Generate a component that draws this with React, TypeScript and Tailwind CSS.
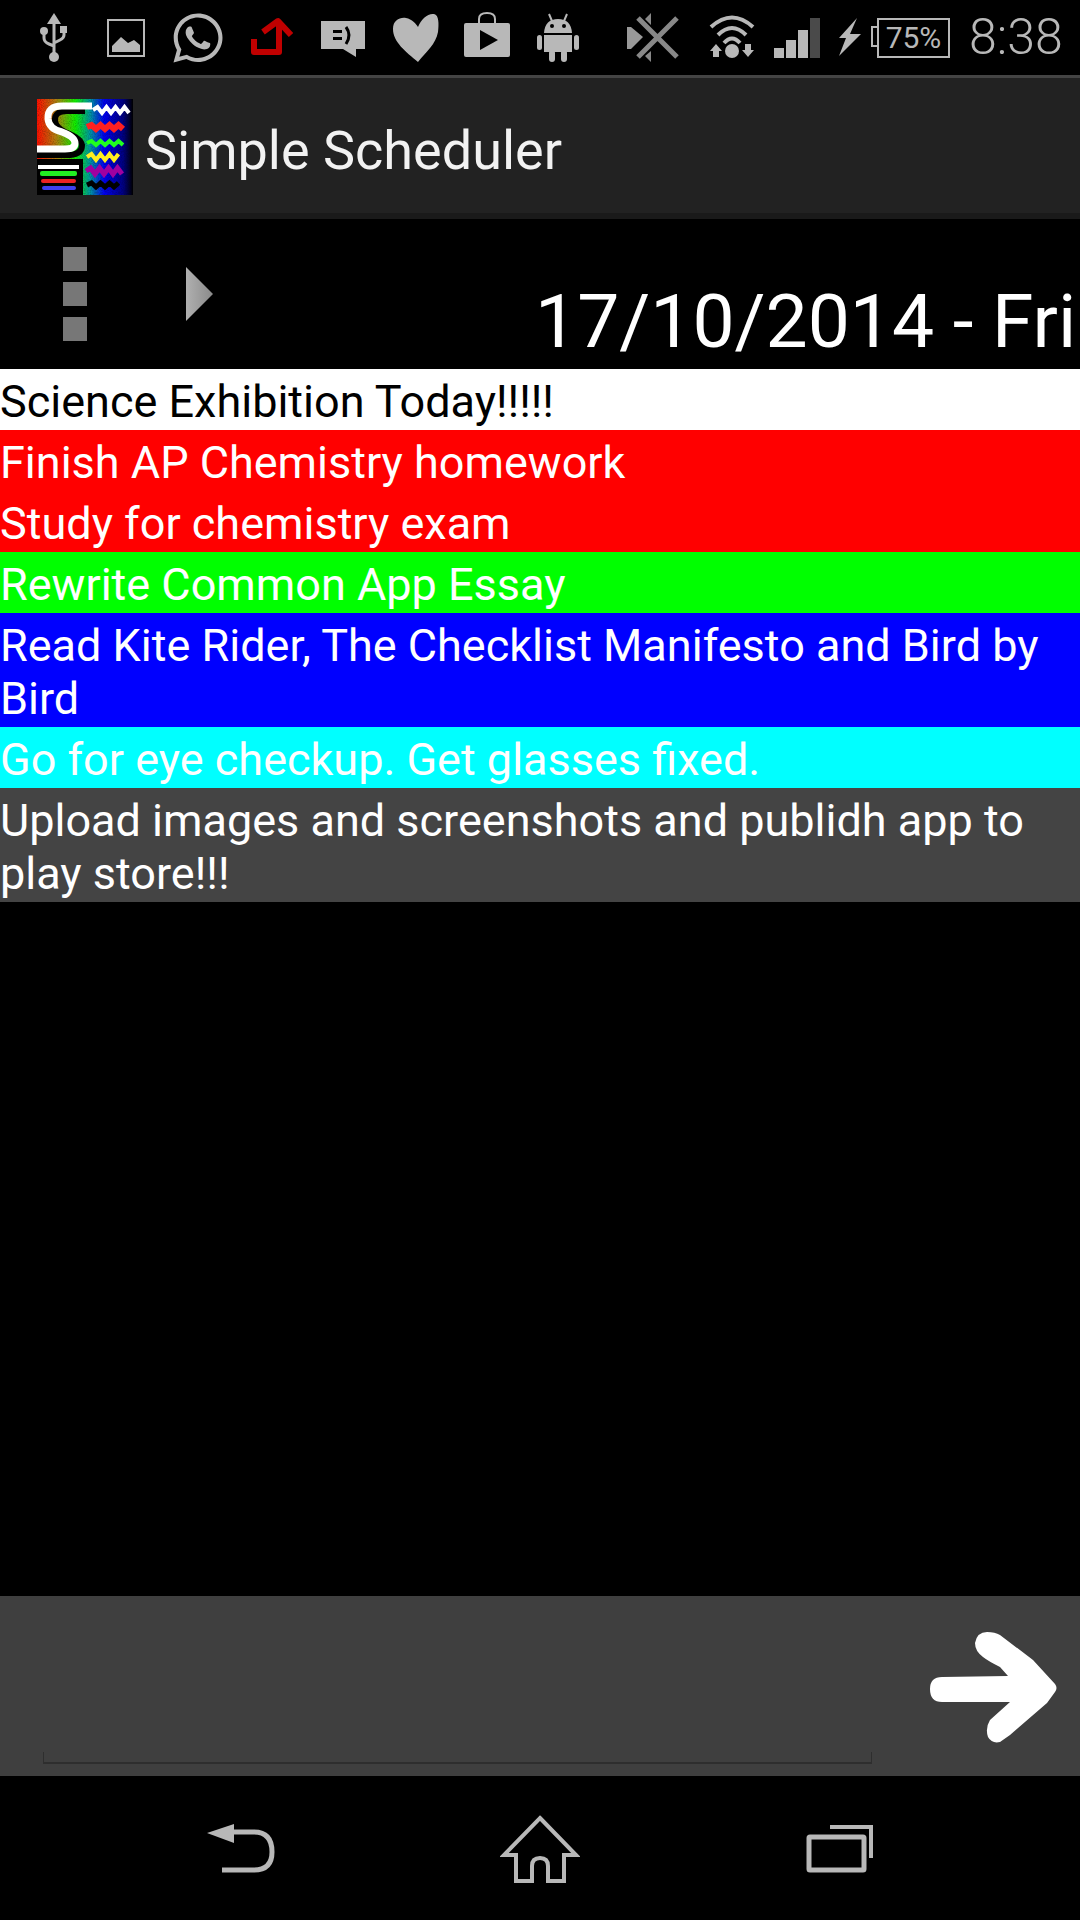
import { FaWhatsapp } from "react-icons/fa"

const GREY = "#b8b8b8"

// zigzag line for the app logo
function zig(x0: number, x1: number, y: number, amp: number, step: number) {
  let d = `M${x0} ${y}`
  let up = true
  for (let x = x0 + step; x <= x1; x += step) {
    d += ` L${x} ${y + (up ? -amp : amp)}`
    up = !up
  }
  return d
}

function Logo() {
  return (
    <svg width="96" height="96" viewBox="0 0 96 96" className="shrink-0 mt-[3px]">
      <defs>
        <linearGradient id="logoBg" x1="0" y1="0" x2="1" y2="0">
          <stop offset="0" stopColor="#ff1000" />
          <stop offset="0.2" stopColor="#b08010" />
          <stop offset="0.4" stopColor="#10f000" />
          <stop offset="0.55" stopColor="#009aa0" />
          <stop offset="0.7" stopColor="#0000f0" />
          <stop offset="0.9" stopColor="#000080" />
          <stop offset="1" stopColor="#000000" />
        </linearGradient>
        <filter id="logoNoise">
          <feTurbulence type="fractalNoise" baseFrequency="0.9" numOctaves="2" seed="4" />
          <feColorMatrix values="0 0 0 0 0  0 0 0 0 0  0 0 0 0 0  1.6 0 0 0 -0.6" />
        </filter>
      </defs>
      <rect width="96" height="96" fill="url(#logoBg)" />
      <rect width="96" height="96" filter="url(#logoNoise)" opacity="0.3" />
      <path d="M48 12 L28 12 Q17 13 18 22 Q19 29 28 33 Q44 39 45 46 Q45 55 33 56 L0 56" fill="none" stroke="#000" strokeWidth="6" />
      <path d="M55 7 L25 7 Q10 7 11 20 Q12 30 25 33 Q38 38 38 44 Q38 50 28 50 L0 50" fill="none" stroke="#fff" strokeWidth="7" />
      <rect x="0" y="60" width="46" height="36" fill="#000" />
      <rect x="1" y="66" width="41" height="4" fill="#fff" />
      <rect x="3" y="72" width="37" height="5" rx="2" fill="#22ee22" />
      <rect x="4" y="80" width="35" height="4" rx="2" fill="#ee2222" />
      <rect x="5" y="87" width="34" height="4" rx="2" fill="#4040ee" />
      <path d={zig(56, 92, 11, 3, 4.5)} fill="none" stroke="#fff" strokeWidth="4" />
      <path d={zig(50, 89, 28, 2, 4.5)} fill="none" stroke="#ff2020" strokeWidth="6" />
      <path d={zig(50, 88, 44, 2, 4.5)} fill="none" stroke="#20ff20" strokeWidth="4" />
      <path d={zig(50, 85, 58, 3, 4.5)} fill="none" stroke="#ffee20" strokeWidth="4" />
      <path d={zig(49, 85, 72, 3, 4.5)} fill="none" stroke="#a000a0" strokeWidth="5" />
      <path d={zig(50, 85, 86, 2, 4.5)} fill="none" stroke="#000" strokeWidth="5" />
    </svg>
  )
}

function StatusIcons() {
  return (
    <>
      {/* usb */}
      <svg width="28" height="75" viewBox="0 0 28 75" className="ml-[40px] shrink-0">
        <path d="M14 13 L7 24 H21 Z" fill={GREY} />
        <path d="M14 20 V55 M4 32 V38 Q4 42 9 44 L14 46 M24 30 V35 Q24 38 20 40 L14 43" stroke={GREY} strokeWidth="3" fill="none" />
        <circle cx="4" cy="31" r="4" fill={GREY} />
        <rect x="20" y="26" width="7" height="7" fill={GREY} />
        <circle cx="14" cy="57" r="5" fill={GREY} />
      </svg>
      {/* picture */}
      <svg width="38" height="75" viewBox="0 0 38 75" className="ml-[39px] shrink-0">
        <rect x="1" y="20" width="36" height="36" fill="none" stroke={GREY} strokeWidth="2" />
        <path d="M5 52 V46 L14 37 L21 43 L27 40 L33 45 V52 Z" fill={GREY} />
      </svg>
      <div className="ml-[27px] shrink-0 flex items-center justify-center w-[52px] h-[75px]">
        <FaWhatsapp size={56} color={GREY} />
      </div>
      {/* upload arrow */}
      <svg width="42" height="75" viewBox="0 0 42 75" className="ml-[27px] shrink-0">
        <path d="M3 39 V52 H28 V24 M12 32 L27 21 L40 35" fill="none" stroke="#c00000" strokeWidth="6" strokeLinejoin="round" />
      </svg>
      {/* sms chat */}
      <svg width="46" height="75" viewBox="0 0 46 75" className="ml-[27px] shrink-0">
        <path d="M1 21 H45 V49 H36 L36 57 L23 49 H1 Z" fill={GREY} />
        <rect x="13" y="30" width="9" height="3" fill="#000" />
        <rect x="13" y="37" width="9" height="3" fill="#000" />
        <path d="M26 27 Q32 35 26 44" fill="none" stroke="#000" strokeWidth="3" />
      </svg>
      {/* heart */}
      <svg width="48" height="75" viewBox="0 0 48 75" className="ml-[26px] shrink-0">
        <path d="M26 62 C14 52 1 42 1 29 C1 20 8 17 14 18 C20 19 24 24 26 27 C29 19 36 13 42 14 C47 15 47 24 46 32 C44 44 34 52 26 62 Z" fill={GREY} />
      </svg>
      {/* play store bag */}
      <svg width="46" height="75" viewBox="0 0 46 75" className="ml-[24px] shrink-0">
        <path d="M15 23 V19 Q15 13 23 13 Q31 13 31 19 V23" fill="none" stroke={GREY} strokeWidth="2" />
        <rect x="0" y="23" width="46" height="34" rx="2" fill={GREY} />
        <path d="M16 30 L34 40 L16 50 Z" fill="#000" />
      </svg>
      {/* android */}
      <svg width="42" height="75" viewBox="0 0 42 75" className="ml-[27px] shrink-0">
        <path d="M12 14 L15 21 M30 14 L27 21" stroke={GREY} strokeWidth="2" />
        <path d="M7 33 Q8 19 21 19 Q34 19 35 33 Z" fill={GREY} />
        <circle cx="15" cy="26" r="2" fill="#000" />
        <circle cx="27" cy="26" r="2" fill="#000" />
        <path d="M7 35 H35 V52 H7 Z" fill={GREY} />
        <rect x="0" y="35" width="5" height="15" rx="2.5" fill={GREY} />
        <rect x="37" y="35" width="5" height="15" rx="2.5" fill={GREY} />
        <rect x="12" y="50" width="6" height="12" rx="3" fill={GREY} />
        <rect x="24" y="50" width="6" height="12" rx="3" fill={GREY} />
      </svg>
      {/* bluetooth/nfc crossed */}
      <svg width="52" height="75" viewBox="0 0 52 75" className="ml-[48px] shrink-0">
        <path d="M0 27 H4 L16 37 L4 49 H0 Z" fill="#999" />
        <path d="M24 13 V25 L18 19 Z M24 51 V62 L18 56 Z" fill="#888" />
        <path d="M11 18 L50 57 M50 18 L11 57" stroke="#888" strokeWidth="5" />
      </svg>
      {/* wifi */}
      <svg width="46" height="75" viewBox="0 0 46 75" className="ml-[30px] shrink-0">
        <path d="M2 27 Q23 8 44 27" fill="none" stroke={GREY} strokeWidth="4" />
        <path d="M9 35 Q23 21 37 35" fill="none" stroke={GREY} strokeWidth="4" />
        <path d="M15 43 Q23 34 31 43" fill="none" stroke={GREY} strokeWidth="4" />
        <circle cx="23" cy="51" r="7" fill={GREY} />
        <path d="M7 44 L13 51 H10 V57 H4 V51 H1 Z M39 57 L33 50 H36 V44 H42 V50 H45 Z" fill={GREY} />
      </svg>
      {/* signal */}
      <svg width="46" height="75" viewBox="0 0 46 75" className="ml-[19px] shrink-0">
        <rect x="0" y="48" width="10" height="10" fill={GREY} />
        <rect x="12" y="40" width="10" height="18" fill={GREY} />
        <rect x="24" y="30" width="10" height="28" fill={GREY} />
        <rect x="36" y="18" width="10" height="40" fill="#4a4a4a" />
      </svg>
      {/* charging bolt */}
      <svg width="23" height="75" viewBox="0 0 23 75" className="ml-[18px] shrink-0">
        <path d="M19 18 L12 34 H23 L1 56 L8 38 H1 Z" fill={GREY} />
      </svg>
      {/* battery */}
      <div className="ml-[9px] shrink-0 flex items-center h-[75px]">
        <svg width="8" height="75" viewBox="0 0 8 75">
          <path d="M7 27 H2 V46 H7" fill="none" stroke={GREY} strokeWidth="2" />
        </svg>
        <div className="w-[73px] h-[40px] border-2 border-[#b8b8b8] -ml-px flex items-center justify-center text-[30px] leading-none text-[#b8b8b8]">
          75%
        </div>
      </div>
      <span className="ml-[19px] text-[50px] leading-[75px] font-light text-[#b8b8b8] whitespace-nowrap">8:38</span>
    </>
  )
}

const rows = [
  { text: "Science Exhibition Today!!!!!", bg: "bg-white", fg: "text-black" },
  { text: "Finish AP Chemistry homework", bg: "bg-[#ff0000]", fg: "text-white" },
  { text: "Study for chemistry exam", bg: "bg-[#ff0000]", fg: "text-white" },
  { text: "Rewrite Common App Essay", bg: "bg-[#00ff00]", fg: "text-white" },
  { text: "Read Kite Rider, The Checklist Manifesto and Bird by Bird", bg: "bg-[#0000ff]", fg: "text-white" },
  { text: "Go for eye checkup. Get glasses fixed.", bg: "bg-[#00ffff]", fg: "text-white" },
  { text: "Upload images and screenshots and publidh app to play store!!!", bg: "bg-[#444444]", fg: "text-white" },
]

export default function App() {
  return (
    <div className="w-[1080px] h-[1920px] flex flex-col overflow-hidden bg-black font-['Roboto',sans-serif]">
      {/* status bar */}
      <div className="h-[75px] flex items-center shrink-0">
        <StatusIcons />
      </div>
      <div className="h-[3px] bg-[#444444] shrink-0" />

      {/* action bar */}
      <div className="h-[135px] bg-[#222222] flex items-center pl-[37px] shrink-0">
        <Logo />
        <span className="ml-[12px] mt-[10px] text-[54px] text-[#f2f2f2]">Simple Scheduler</span>
      </div>
      <div className="h-[6px] bg-[#1a1a1a] shrink-0" />

      {/* date row */}
      <div className="h-[150px] flex shrink-0 overflow-hidden">
        <div className="ml-[63px] pt-[28px] flex flex-col gap-[11px] shrink-0">
          <div className="w-[24px] h-[24px] bg-[#777777]" />
          <div className="w-[24px] h-[24px] bg-[#777777]" />
          <div className="w-[24px] h-[24px] bg-[#777777]" />
        </div>
        <svg width="28" height="54" viewBox="0 0 28 54" className="ml-[99px] mt-[48px] shrink-0">
          <defs>
            <linearGradient id="tri" x1="0" y1="0" x2="1" y2="0">
              <stop offset="0" stopColor="#b0b0b0" />
              <stop offset="1" stopColor="#8a8a8a" />
            </linearGradient>
          </defs>
          <path d="M0 0 L27 27 L0 54 Z" fill="url(#tri)" />
        </svg>
        <span className="ml-[321px] mt-[53px] text-[75px] leading-[98px] text-white whitespace-nowrap">
          17/10/2014 - Fri
        </span>
      </div>

      {/* task list */}
      <div className="flex flex-col shrink-0">
        {rows.map((r) => (
          <div key={r.text} className={`${r.bg} ${r.fg} text-[45px] leading-[53px] pt-[6px] pb-[2px]`}>
            {r.text}
          </div>
        ))}
      </div>

      <div className="flex-1" />

      {/* input bar */}
      <div className="h-[180px] bg-[#3f3f3f] flex shrink-0">
        <div className="ml-[43px] w-[829px] h-[12px] mt-[156px] border-x border-b-2 border-[#2e2e2e] shrink-0" />
        <svg width="180" height="180" viewBox="0 0 180 180" className="ml-[28px] shrink-0">
          <path
            d="M30 93 Q30 81 42 81 L108 80 L100 71 Q88 65 83 61 Q75 55 75 47 Q77 36 87 36 Q95 36 100 39 L133 64 L155 88 Q158 92 155 96 L147 107 L110 139 L100 146 Q92 148 88 141 Q85 132 90 124 L110 106 L63 106 L42 106 Q30 106 30 93 Z"
            fill="#fff"
          />
        </svg>
      </div>

      {/* nav bar */}
      <div className="h-[144px] flex items-center justify-center gap-[220px] shrink-0">
        <svg width="80" height="80" viewBox="0 0 80 80" fill="none" stroke={GREY}>
          <path d="M7 25 L34 16 V35 Z" fill={GREY} stroke="none" />
          <path d="M32 24 H54 Q72 24 72 44 Q72 62 54 62 H22" strokeWidth="5" />
        </svg>
        <svg width="80" height="80" viewBox="0 0 80 80" fill="none" stroke={GREY}>
          <path d="M40 10 L76 47 H64 V73 H48 V58 Q48 50 40 50 Q32 50 32 58 V73 H16 V47 H4 Z" strokeWidth="4" />
        </svg>
        <svg width="80" height="80" viewBox="0 0 80 80" fill="none" stroke={GREY}>
          <rect x="9" y="29" width="55" height="33" rx="1" strokeWidth="5" />
          <path d="M30 19 H71 V50" strokeWidth="4" />
        </svg>
      </div>
    </div>
  )
}
